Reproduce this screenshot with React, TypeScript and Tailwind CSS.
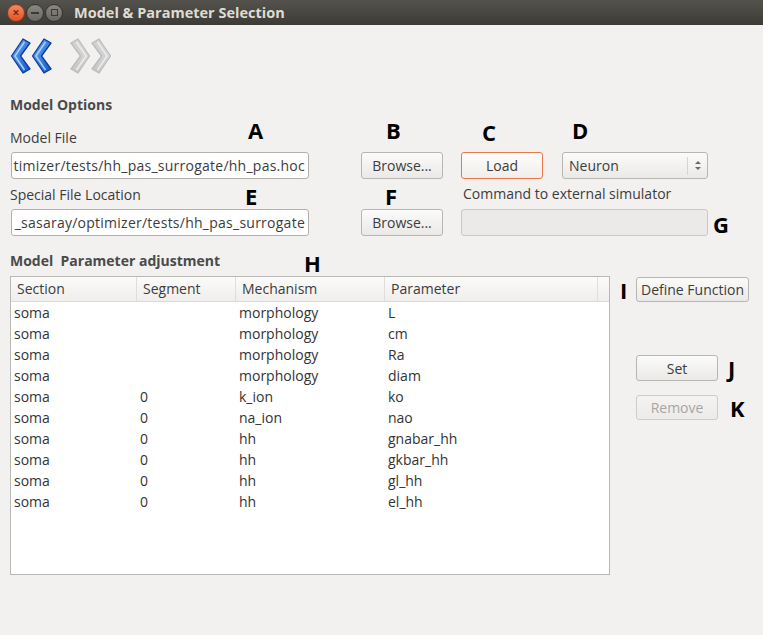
import React from 'react';

const font = "font-['Open_Sans',sans-serif]";
const letter = "font-['Open_Sans',sans-serif] font-bold text-[22px] leading-[24px] text-black";

const rows: [string, string, string, string][] = [
  ['soma', '', 'morphology', 'L'],
  ['soma', '', 'morphology', 'cm'],
  ['soma', '', 'morphology', 'Ra'],
  ['soma', '', 'morphology', 'diam'],
  ['soma', '0', 'k_ion', 'ko'],
  ['soma', '0', 'na_ion', 'nao'],
  ['soma', '0', 'hh', 'gnabar_hh'],
  ['soma', '0', 'hh', 'gkbar_hh'],
  ['soma', '0', 'hh', 'gl_hh'],
  ['soma', '0', 'hh', 'el_hh'],
];

const cols = ['w-[126px]', 'w-[99px]', 'w-[149px]', 'w-[213px]'];

const Chevron = ({ id, flip, from, to, stroke, hi }: { id: string; flip?: boolean; from: string; to: string; stroke: string; hi: string }) => (
  <svg width="21" height="36" viewBox="0 0 21 36">
    <defs>
      <linearGradient id={id} x1="0" y1="0" x2="1" y2="1">
        <stop offset="0" stopColor={from} />
        <stop offset="1" stopColor={to} />
      </linearGradient>
    </defs>
    <g transform={flip ? 'translate(21,0) scale(-1,1)' : undefined}>
      <polygon points="13,1 20,5 10.5,18 20,31 13,35 1.5,18" fill={`url(#${id})`} stroke={stroke} strokeWidth="1.3" strokeLinejoin="round" />
      <polyline points="14.5,4 5,18 14.5,32" fill="none" stroke={hi} strokeWidth="1.5" strokeLinejoin="round" />
    </g>
  </svg>
);

const Button = ({ label, className = '', disabled, focus }: { label: string; className?: string; disabled?: boolean; focus?: boolean }) => (
  <div
    className={`flex items-center justify-center rounded-[3px] border bg-gradient-to-b ${
      focus ? 'border-[#e9774c] from-[#fefdfc] to-[#f1eeeb]' : disabled ? 'border-[#cfcdca] from-[#f4f3f2] to-[#ecebe9]' : 'border-[#b9b6b1] from-[#fbfbfa] to-[#eae9e7]'
    } ${disabled ? 'text-[#a7a5a2]' : 'text-[#3c3c3c]'} text-[14px] ${className}`}
  >
    {label}
  </div>
);

const TextField = ({ value, className = '' }: { value: string; className?: string }) => (
  <div className={`flex items-center justify-end overflow-hidden whitespace-nowrap rounded-[3px] border border-[#b3b0ab] bg-white pr-[3px] text-[14px] tracking-[0.25px] text-[#3c3c3c] ${className}`}>
    {value}
  </div>
);

export default function App() {
  return (
    <div className={`${font} flex h-[635px] w-[763px] flex-col overflow-hidden bg-[#f2f1f0] text-[#3c3c3c]`}>
      {/* title bar */}
      <div className="flex h-[25px] items-center bg-gradient-to-b from-[#54524c] to-[#3c3b37]">
        <div className="ml-[7px] flex h-[18px] w-[18px] items-center justify-center rounded-full border border-[#8a3a1c] bg-gradient-to-b from-[#f78760] to-[#e0521f] text-[12px] font-bold leading-none text-[#7a2a10]">
          ×
        </div>
        <div className="ml-[1px] flex h-[18px] w-[18px] items-center justify-center rounded-full border border-[#34332f] bg-gradient-to-b from-[#8a8780] to-[#6a6862]">
          <div className="h-[2px] w-[8px] bg-[#3a3935]" />
        </div>
        <div className="ml-[1px] flex h-[18px] w-[18px] items-center justify-center rounded-full border border-[#34332f] bg-gradient-to-b from-[#8a8780] to-[#6a6862]">
          <div className="h-[7px] w-[7px] border-[1.5px] border-[#3a3935]" />
        </div>
        <span className="ml-[11px] text-[14.5px] font-bold text-[#dfdbd2]">Model &amp; Parameter Selection</span>
      </div>

      {/* navigation arrows */}
      <div className="ml-[10px] mt-[13px] flex h-[36px] items-center">
        <Chevron id="b1" from="#6aaaf5" to="#1256c8" stroke="#0b3d97" hi="#a9d0ff" />
        <div className="ml-0">
          <Chevron id="b2" from="#6aaaf5" to="#1256c8" stroke="#0b3d97" hi="#a9d0ff" />
        </div>
        <div className="ml-[18px]">
          <Chevron id="g1" flip from="#dcdcdc" to="#c4c4c4" stroke="#bcbcbc" hi="#ececec" />
        </div>
        <div className="ml-0">
          <Chevron id="g2" flip from="#dcdcdc" to="#c4c4c4" stroke="#bcbcbc" hi="#ececec" />
        </div>
      </div>

      {/* model options */}
      <div className="ml-[10px] mt-[21px] h-[20px] text-[14px] font-bold leading-[20px] text-[#4a4a4a]">Model Options</div>

      <div className="flex h-[37px] items-end">
        <span className="mb-[4px] ml-[10px] w-[238px] text-[14px] leading-[20px]">Model File</span>
        <span className={`mb-[10px] w-[138px] ${letter}`}>A</span>
        <span className={`mb-[10px] w-[96px] ${letter}`}>B</span>
        <span className={`mb-[8px] w-[90px] ${letter}`}>C</span>
        <span className={`mb-[10px] ${letter}`}>D</span>
      </div>

      <div className="flex h-[27px]">
        <TextField value="timizer/tests/hh_pas_surrogate/hh_pas.hoc" className="ml-[11px] w-[298px]" />
        <Button label="Browse..." className="ml-[52px] w-[82px]" />
        <Button label="Load" focus className="ml-[18px] w-[82px]" />
        <div className="ml-[19px] flex w-[146px] items-center rounded-[3px] border border-[#b9b6b1] bg-gradient-to-b from-[#fbfbfa] to-[#eae9e7] text-[14px]">
          <span className="ml-[6px] flex-1">Neuron</span>
          <div className="h-[18px] w-px bg-[#d6d4d1]" />
          <div className="flex w-[19px] flex-col items-center gap-[3px]">
            <div className="h-0 w-0 border-x-[3px] border-b-[3px] border-x-transparent border-b-[#6a6a6a]" />
            <div className="h-0 w-0 border-x-[3px] border-t-[3px] border-x-transparent border-t-[#6a6a6a]" />
          </div>
        </div>
      </div>

      <div className="flex h-[30px] items-end">
        <span className="mb-[4px] ml-[10px] w-[235px] text-[14px] leading-[20px]">Special File Location</span>
        <span className={`mb-[1px] w-[140px] ${letter}`}>E</span>
        <span className={`mb-[1px] w-[78px] ${letter}`}>F</span>
        <span className="mb-[5px] text-[14px] leading-[20px]">Command to external simulator</span>
      </div>

      <div className="flex h-[27px] items-center">
        <TextField value="_sasaray/optimizer/tests/hh_pas_surrogate" className="ml-[11px] h-full w-[298px]" />
        <Button label="Browse..." className="ml-[52px] h-full w-[82px]" />
        <div className="ml-[18px] h-full w-[247px] rounded-[3px] border border-[#cbc9c6] bg-[#ebeae8]" />
        <span className={`ml-[5px] mt-[2px] ${letter}`}>G</span>
      </div>

      {/* parameter adjustment */}
      <div className="flex h-[40px] items-end">
        <span className="mb-[5px] ml-[10px] w-[294px] whitespace-pre text-[14px] font-bold leading-[20px] text-[#4a4a4a]">Model  Parameter adjustment</span>
        <span className={`mb-[1px] ${letter}`}>H</span>
      </div>

      <div className="flex">
        <div className="ml-[10px] flex h-[299px] w-[600px] flex-col border border-[#bab8b4] bg-white text-[14px]">
          <div className="flex h-[25px] border-b border-[#dcdad7] bg-gradient-to-b from-[#fbfbfa] to-[#efeeed] leading-[22px]">
            {['Section', 'Segment', 'Mechanism', 'Parameter'].map((h, i) => (
              <div key={h} className={`${cols[i]} flex items-center border-r border-[#dfdedc] pl-[6px]`}>
                {h}
              </div>
            ))}
          </div>
          <div className="flex flex-col">
            {rows.map((r, idx) => (
              <div key={idx} className="flex h-[21px] items-center leading-[19px] text-[#333333]">
                {r.map((c, i) => (
                  <div key={i} className={`${cols[i]} pl-[3px]`}>
                    {c}
                  </div>
                ))}
              </div>
            ))}
          </div>
        </div>

        <div className="flex flex-col">
          <div className="mt-[1px] flex h-[25px] items-center">
            <span className={`ml-[10px] w-[16px] ${letter}`}>I</span>
            <Button label="Define Function" className="h-full w-[113px]" />
          </div>
          <div className="mt-[53px] flex h-[26px] items-center">
            <Button label="Set" className="ml-[26px] h-full w-[82px]" />
            <span className={`ml-[10px] ${letter}`}>J</span>
          </div>
          <div className="mt-[14px] flex h-[25px] items-center">
            <Button label="Remove" disabled className="ml-[26px] h-full w-[82px]" />
            <span className={`ml-[12px] ${letter}`}>K</span>
          </div>
        </div>
      </div>
    </div>
  );
}
